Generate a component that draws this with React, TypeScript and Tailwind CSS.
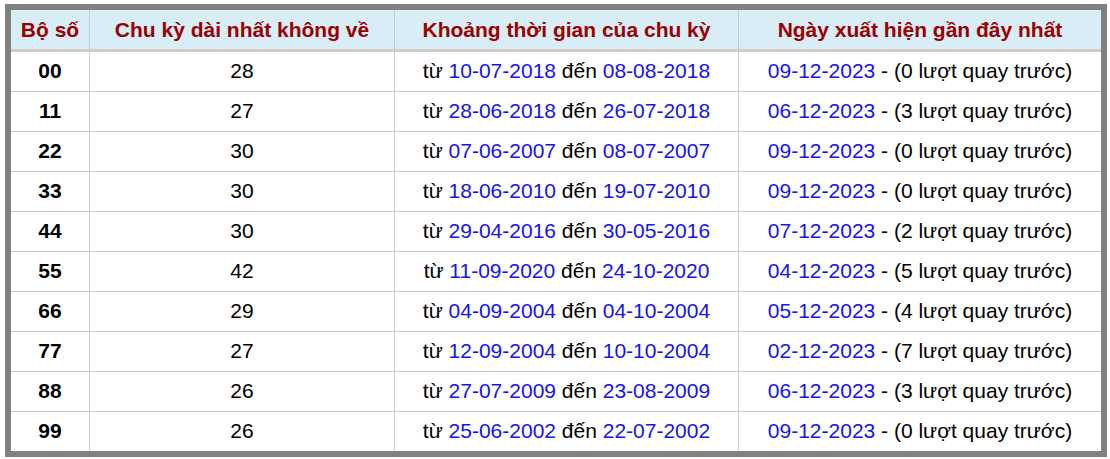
import React from "react";

const rows = [
  { bo: "00", ky: 28, from: "10-07-2018", to: "08-08-2018", last: "09-12-2023", luot: 0 },
  { bo: "11", ky: 27, from: "28-06-2018", to: "26-07-2018", last: "06-12-2023", luot: 3 },
  { bo: "22", ky: 30, from: "07-06-2007", to: "08-07-2007", last: "09-12-2023", luot: 0 },
  { bo: "33", ky: 30, from: "18-06-2010", to: "19-07-2010", last: "09-12-2023", luot: 0 },
  { bo: "44", ky: 30, from: "29-04-2016", to: "30-05-2016", last: "07-12-2023", luot: 2 },
  { bo: "55", ky: 42, from: "11-09-2020", to: "24-10-2020", last: "04-12-2023", luot: 5 },
  { bo: "66", ky: 29, from: "04-09-2004", to: "04-10-2004", last: "05-12-2023", luot: 4 },
  { bo: "77", ky: 27, from: "12-09-2004", to: "10-10-2004", last: "02-12-2023", luot: 7 },
  { bo: "88", ky: 26, from: "27-07-2009", to: "23-08-2009", last: "06-12-2023", luot: 3 },
  { bo: "99", ky: 26, from: "25-06-2002", to: "22-07-2002", last: "09-12-2023", luot: 0 },
];

const cols = "grid grid-cols-[79px_305px_344px_362px]";

function App() {
  return (
    <div className="w-[1110px] h-[459px] bg-white pt-[4px] pl-[5px] font-['Liberation_Sans',Arial,sans-serif] text-[21px]">
      <div className="w-[1102px] border-[6px] border-[#808080] bg-white">
        <div className={`${cols} h-[42px] bg-[#d9edf7] border-b-[3px] border-[#cccccc] font-bold text-[#990000]`}>
          <div className="flex items-center justify-center border-r border-[#cccccc]">Bộ số</div>
          <div className="flex items-center justify-center border-r border-[#cccccc]">Chu kỳ dài nhất không về</div>
          <div className="flex items-center justify-center border-r border-[#cccccc]">Khoảng thời gian của chu kỳ</div>
          <div className="flex items-center justify-center">Ngày xuất hiện gần đây nhất</div>
        </div>
        {rows.map((r, i) => (
          <div
            key={r.bo}
            className={`${cols} text-black ${i < rows.length - 1 ? "h-[40px] border-b border-[#cccccc]" : "h-[39px]"}`}
          >
            <div className="flex items-center justify-center pb-[2px] border-r border-[#cccccc] font-bold">{r.bo}</div>
            <div className="flex items-center justify-center pb-[2px] border-r border-[#cccccc]">{r.ky}</div>
            <div className="flex items-center justify-center pb-[2px] border-r border-[#cccccc] whitespace-pre">
              từ <span className="text-[#1414f0]">{r.from}</span> đến <span className="text-[#1414f0]">{r.to}</span>
            </div>
            <div className="flex items-center justify-center pb-[2px] whitespace-pre">
              <span className="text-[#1414f0]">{r.last}</span> - ({r.luot} lượt quay trước)
            </div>
          </div>
        ))}
      </div>
    </div>
  );
}

export default App;
